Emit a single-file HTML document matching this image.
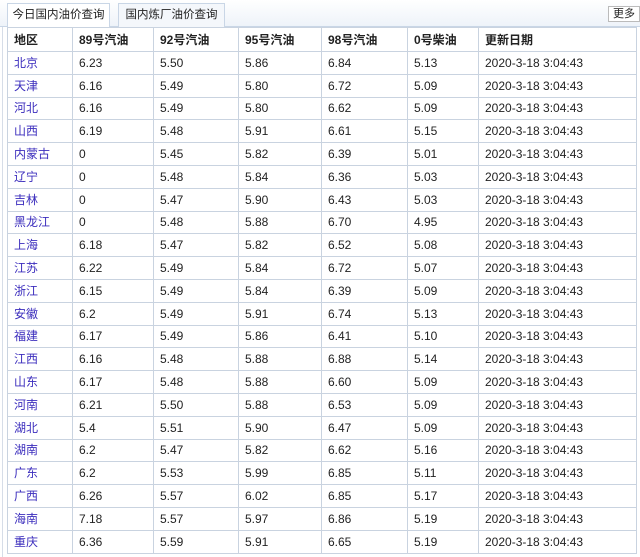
<!DOCTYPE html>
<html><head><style>
*{box-sizing:border-box}
body{margin:0;width:640px;height:551px;overflow:hidden;background:#fff;font-family:"Liberation Sans","Noto Sans CJK SC",sans-serif;font-size:12px;color:#222}
.bar{position:absolute;left:0;top:0;width:640px;height:27px;background:linear-gradient(#fff,#eef3f9);border-bottom:1px solid #c9d6e6}
.tab{position:absolute;top:3px;height:24px;line-height:22px;border:1px solid #c9d6e6;border-bottom:none;background:#f4f7fb;padding:0;text-align:center;font-size:11.5px;color:#222;white-space:nowrap}
.t1{left:7px;width:103px;background:#fff;height:25px}
.t2{left:118px;width:107px}
.more{position:absolute;right:0;top:6px;height:16px;line-height:14px;border:1px solid #bbb;background:#fff;padding:0 4px;font-size:11px}
.lb{position:absolute;left:2px;top:27px;width:1px;height:530px;background:#d6dde8}
table{position:absolute;left:7px;top:27px;border-collapse:collapse;width:630px;table-layout:fixed;font-size:12px}
td{border:1px solid #c9d3e0;height:22.8px;line-height:14px;padding:0 0 0 6px;white-space:nowrap;overflow:hidden}
tr.h td{height:24px;font-weight:bold}
td a{color:#3b2dbd;text-decoration:none}
</style></head><body>
<div class="bar"></div>
<div class="tab t1">今日国内油价查询</div>
<div class="tab t2">国内炼厂油价查询</div>
<div class="more">更多</div>
<div class="lb"></div>
<table>
<colgroup><col style="width:65px"><col style="width:81px"><col style="width:85px"><col style="width:83px"><col style="width:86px"><col style="width:71px"><col></colgroup>
<tr class="h"><td>地区</td><td>89号汽油</td><td>92号汽油</td><td>95号汽油</td><td>98号汽油</td><td>0号柴油</td><td>更新日期</td></tr>
<tr><td><a>北京</a></td><td>6.23</td><td>5.50</td><td>5.86</td><td>6.84</td><td>5.13</td><td>2020-3-18 3:04:43</td></tr>
<tr><td><a>天津</a></td><td>6.16</td><td>5.49</td><td>5.80</td><td>6.72</td><td>5.09</td><td>2020-3-18 3:04:43</td></tr>
<tr><td><a>河北</a></td><td>6.16</td><td>5.49</td><td>5.80</td><td>6.62</td><td>5.09</td><td>2020-3-18 3:04:43</td></tr>
<tr><td><a>山西</a></td><td>6.19</td><td>5.48</td><td>5.91</td><td>6.61</td><td>5.15</td><td>2020-3-18 3:04:43</td></tr>
<tr><td><a>内蒙古</a></td><td>0</td><td>5.45</td><td>5.82</td><td>6.39</td><td>5.01</td><td>2020-3-18 3:04:43</td></tr>
<tr><td><a>辽宁</a></td><td>0</td><td>5.48</td><td>5.84</td><td>6.36</td><td>5.03</td><td>2020-3-18 3:04:43</td></tr>
<tr><td><a>吉林</a></td><td>0</td><td>5.47</td><td>5.90</td><td>6.43</td><td>5.03</td><td>2020-3-18 3:04:43</td></tr>
<tr><td><a>黑龙江</a></td><td>0</td><td>5.48</td><td>5.88</td><td>6.70</td><td>4.95</td><td>2020-3-18 3:04:43</td></tr>
<tr><td><a>上海</a></td><td>6.18</td><td>5.47</td><td>5.82</td><td>6.52</td><td>5.08</td><td>2020-3-18 3:04:43</td></tr>
<tr><td><a>江苏</a></td><td>6.22</td><td>5.49</td><td>5.84</td><td>6.72</td><td>5.07</td><td>2020-3-18 3:04:43</td></tr>
<tr><td><a>浙江</a></td><td>6.15</td><td>5.49</td><td>5.84</td><td>6.39</td><td>5.09</td><td>2020-3-18 3:04:43</td></tr>
<tr><td><a>安徽</a></td><td>6.2</td><td>5.49</td><td>5.91</td><td>6.74</td><td>5.13</td><td>2020-3-18 3:04:43</td></tr>
<tr><td><a>福建</a></td><td>6.17</td><td>5.49</td><td>5.86</td><td>6.41</td><td>5.10</td><td>2020-3-18 3:04:43</td></tr>
<tr><td><a>江西</a></td><td>6.16</td><td>5.48</td><td>5.88</td><td>6.88</td><td>5.14</td><td>2020-3-18 3:04:43</td></tr>
<tr><td><a>山东</a></td><td>6.17</td><td>5.48</td><td>5.88</td><td>6.60</td><td>5.09</td><td>2020-3-18 3:04:43</td></tr>
<tr><td><a>河南</a></td><td>6.21</td><td>5.50</td><td>5.88</td><td>6.53</td><td>5.09</td><td>2020-3-18 3:04:43</td></tr>
<tr><td><a>湖北</a></td><td>5.4</td><td>5.51</td><td>5.90</td><td>6.47</td><td>5.09</td><td>2020-3-18 3:04:43</td></tr>
<tr><td><a>湖南</a></td><td>6.2</td><td>5.47</td><td>5.82</td><td>6.62</td><td>5.16</td><td>2020-3-18 3:04:43</td></tr>
<tr><td><a>广东</a></td><td>6.2</td><td>5.53</td><td>5.99</td><td>6.85</td><td>5.11</td><td>2020-3-18 3:04:43</td></tr>
<tr><td><a>广西</a></td><td>6.26</td><td>5.57</td><td>6.02</td><td>6.85</td><td>5.17</td><td>2020-3-18 3:04:43</td></tr>
<tr><td><a>海南</a></td><td>7.18</td><td>5.57</td><td>5.97</td><td>6.86</td><td>5.19</td><td>2020-3-18 3:04:43</td></tr>
<tr><td><a>重庆</a></td><td>6.36</td><td>5.59</td><td>5.91</td><td>6.65</td><td>5.19</td><td>2020-3-18 3:04:43</td></tr>
</table>
</body></html>
